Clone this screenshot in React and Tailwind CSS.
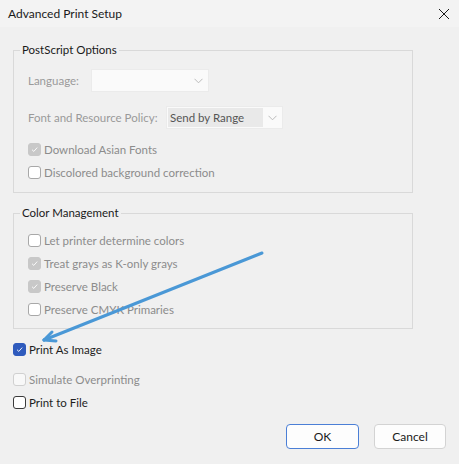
import React from "react";

const FONT = { fontFamily: "Lato, 'Open Sans', sans-serif" };

function Check({ state }) {
  const base = "w-[13px] h-[13px] rounded-[3px] flex items-center justify-center shrink-0";
  let cls = "";
  if (state === "on") cls = "bg-[#2f5bbd] border border-[#2f5bbd]";
  else if (state === "on-disabled") cls = "bg-[#c8c8c8] border border-[#c8c8c8]";
  else if (state === "off-dark") cls = "bg-white border border-[#3a3a3a]";
  else if (state === "off-faint") cls = "bg-[#f8f8f8] border border-[#d0d0d0]";
  else cls = "bg-white border border-[#a8a8a8]";
  const checked = state === "on" || state === "on-disabled";
  return (
    <span className={`${base} ${cls}`}>
      {checked && (
        <svg width="9" height="9" viewBox="0 0 9 9" fill="none">
          <path d="M2 4.7 L3.8 6.4 L7.2 2.6" stroke="#ffffff" strokeWidth="0.9" />
        </svg>
      )}
    </span>
  );
}

function CheckRow({ state, label, dim, className = "" }) {
  return (
    <div className={`flex items-center h-[23px] gap-[3px] ${className}`}>
      <Check state={state} />
      <span className={`text-[11.5px] whitespace-nowrap ${dim ? "text-[#8c8c8c]" : "text-[#1e1e1e]"}`}>{label}</span>
    </div>
  );
}

function Chevron() {
  return (
    <svg width="9" height="6" viewBox="0 0 9 6" fill="none">
      <path d="M0.5 0.8 L4.5 4.8 L8.5 0.8" stroke="#b4b4b4" strokeWidth="0.9" />
    </svg>
  );
}

export default function App() {
  return (
    <div className="relative w-[459px] h-[464px] bg-[#f0f0f0] overflow-hidden" style={FONT}>
      <div className="h-[27px] bg-[#f3f3f3] flex items-center justify-between pl-[8px] pr-[5px]">
        <span className="text-[12px] text-[#1a1a1a]">Advanced Print Setup</span>
        <svg width="12" height="12" viewBox="0 0 12 12" fill="none" className="mr-[4px]">
          <path d="M1 1 L11 11 M11 1 L1 11" stroke="#1a1a1a" strokeWidth="1" />
        </svg>
      </div>

      <div className="px-[13px]">
        <fieldset className="mt-[15px] w-[400px] border border-[#d9d9d9] pb-[8px]">
          <legend className="ml-[6px] px-[2px] h-[16px] leading-[16px] text-[11.5px] text-[#1a1a1a]">PostScript Options</legend>
          <div className="pl-[14px]">
            <div className="mt-[11px] flex items-center h-[23px]">
              <span className="w-[63px] shrink-0 whitespace-nowrap text-[11.5px] text-[#9a9a9a]">Language:</span>
              <div className="w-[118px] h-[23px] bg-[#fafafa] border border-[#ebebeb] flex items-center justify-end pr-[5px]">
                <Chevron />
              </div>
            </div>
            <div className="mt-[14px] flex items-center h-[23px]">
              <span className="w-[138px] shrink-0 whitespace-nowrap text-[11.5px] text-[#9a9a9a]">Font and Resource Policy:</span>
              <div className="w-[117px] h-[23px] bg-[#fafafa] border border-[#ebebeb] flex items-center pl-[1px] pr-[5px]">
                <div className="w-[95px] h-[19px] bg-[#e9e9e9] flex items-center pl-[2px] text-[11.5px] text-[#555555] whitespace-nowrap">Send by Range</div>
                <div className="flex-1 flex justify-end">
                  <Chevron />
                </div>
              </div>
            </div>
            <CheckRow state="on-disabled" label="Download Asian Fonts" dim className="mt-[9px]" />
            <CheckRow state="off" label="Discolored background correction" dim />
          </div>
        </fieldset>

        <fieldset className="mt-[12px] w-[400px] border border-[#d9d9d9] pb-[7px]">
          <legend className="ml-[6px] px-[2px] h-[16px] leading-[16px] text-[11.5px] text-[#1a1a1a]">Color Management</legend>
          <div className="mt-[8px] pl-[14px]">
            <CheckRow state="off" label="Let printer determine colors" dim />
            <CheckRow state="on-disabled" label="Treat grays as K-only grays" dim />
            <CheckRow state="on-disabled" label="Preserve Black" dim />
            <CheckRow state="off" label="Preserve CMYK Primaries" dim />
          </div>
        </fieldset>

        <CheckRow state="on" label="Print As Image" className="mt-[9px]" />
        <CheckRow state="off-faint" label="Simulate Overprinting" dim className="mt-[7px]" />
        <CheckRow state="off-dark" label="Print to File" />

        <div className="mt-[10px] flex justify-end gap-[15px]">
          <button className="w-[73px] h-[25px] rounded-[4px] bg-[#fdfdfd] border border-[#4b7fd6] text-[12px] text-[#1a1a1a]">OK</button>
          <button className="w-[72px] h-[25px] rounded-[4px] bg-[#fdfdfd] border border-[#d3d3d3] text-[12px] text-[#1a1a1a]">Cancel</button>
        </div>
      </div>

      {/* callout arrow drawn on top */}
      <svg className="absolute left-0 top-0 pointer-events-none" width="459" height="464" viewBox="0 0 459 464">
        <g stroke="#4a98d6" strokeWidth="3" strokeLinecap="round" fill="none">
          <path d="M262 253 L44 340" />
          <path d="M44 340 L56 341" />
          <path d="M44 340 L52 332" />
        </g>
      </svg>
    </div>
  );
}
